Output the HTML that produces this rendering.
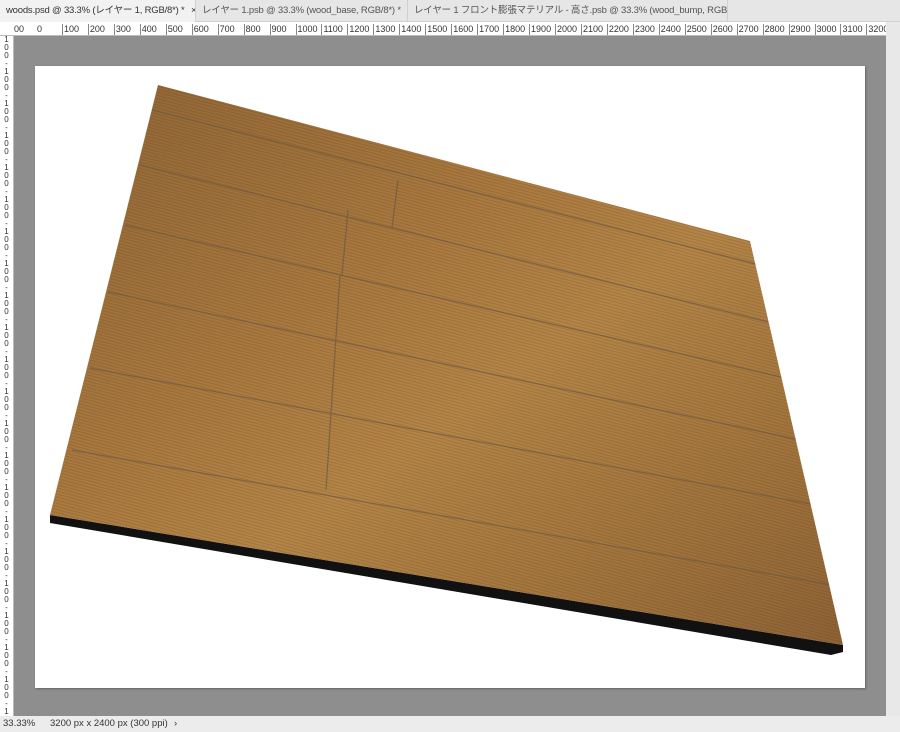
<!DOCTYPE html>
<html><head><meta charset="utf-8"><style>
*{margin:0;padding:0;box-sizing:border-box}
body{width:900px;height:732px;overflow:hidden;background:#8e8e8e;font-family:"Liberation Sans","Noto Sans CJK JP",sans-serif;position:relative}
.tabs{position:absolute;left:0;top:0;width:900px;height:22px;background:#e6e6e6;border-bottom:1px solid #d0d0d0;font-size:9.5px;color:#555}
.tab{position:absolute;top:0;height:22px;line-height:22px;padding-left:6px;border-right:1px solid #d0d0d0;white-space:nowrap;overflow:hidden;letter-spacing:-0.2px}
.ruler{position:absolute;left:0;top:22px;width:900px;height:14px;background:#fff;border-bottom:1px solid #bbb;font-size:9px;color:#333;overflow:hidden;white-space:nowrap}
.vr{position:absolute;left:0;top:36px;width:14px;height:680px;background:#fff;border-right:1px solid #bbb;font-size:8px;line-height:8px;color:#333;overflow:hidden;text-align:center}
.status{position:absolute;left:0;top:716px;width:900px;height:16px;background:#ececec;font-size:9.5px;line-height:16px;color:#333;white-space:nowrap}
.sb{position:absolute;left:886px;top:22px;width:14px;height:694px;background:#e8e8e8}
</style></head><body>
<div class="tabs">
<div class="tab" style="left:0;width:196px;background:#f2f2f2;color:#333">woods.psd @ 33.3% (レイヤー 1, RGB/8*) * <span style="margin-left:4px">×</span></div>
<div class="tab" style="left:196px;width:212px">レイヤー 1.psb @ 33.3% (wood_base, RGB/8*) * <span style="margin-left:4px">×</span></div>
<div class="tab" style="left:408px;width:320px">レイヤー 1 フロント膨張マテリアル - 高さ.psb @ 33.3% (wood_bump, RGB/8*) <span style="margin-left:4px">×</span></div>
</div>
<div class="ruler">
<span style="position:absolute;left:14px;top:2px">00</span>
<span style="position:absolute;left:37px;top:2px">0</span>
<script>
for(let i=1;i<=32;i++){document.write('<span style="position:absolute;left:'+(36+i*25.95)+'px;top:2px;border-left:1px solid #888;padding-left:1px;height:12px">'+(i*100)+'</span>')}
</script>
</div>
<div class="vr">
<script>for(let i=0;i<90;i++)document.write((i%4==0?'1':i%4==1?'0':i%4==2?'0':'-')+'<br>')</script>
</div>
<div class="sb"></div>
<div style="position:absolute;left:35px;top:66px;width:830px;height:622px;background:#fff;box-shadow:1px 1px 2px rgba(0,0,0,.3)"></div>
<svg style="position:absolute;left:0;top:0" width="900" height="732">
<defs>
<linearGradient id="g" x1="0" y1="0" x2="1" y2="1">
<stop offset="0" stop-color="#8e6535"/><stop offset=".35" stop-color="#a8783f"/><stop offset=".55" stop-color="#b48548"/><stop offset=".8" stop-color="#a0733c"/><stop offset="1" stop-color="#8d6236"/>
</linearGradient>
<pattern id="grain" width="6" height="3" patternUnits="userSpaceOnUse" patternTransform="rotate(15)">
<rect width="6" height="1" fill="rgba(60,35,10,.15)"/>
</pattern>
<clipPath id="c"><polygon points="158,85 750,241 843,645 50,515"/></clipPath>
</defs>
<polygon points="50,515 843,645 843,652 831,655 50,523" fill="#111"/>
<polygon points="158,85 750,241 843,645 50,515" fill="url(#g)"/>
<g clip-path="url(#c)">
<polygon points="158,85 750,241 843,645 50,515" fill="url(#grain)"/>
<g stroke="#6e5a45" stroke-width="1.2" opacity=".75">
<line x1="152" y1="110" x2="756" y2="264"/>
<line x1="140" y1="165" x2="768" y2="322"/>
<line x1="125" y1="225" x2="785" y2="378"/>
<line x1="108" y1="292" x2="800" y2="440"/>
<line x1="90" y1="368" x2="815" y2="505"/>
<line x1="72" y1="450" x2="832" y2="585"/>
<line x1="398" y1="180" x2="392" y2="228"/>
<line x1="348" y1="210" x2="342" y2="275"/>
<line x1="340" y1="275" x2="326" y2="490"/>
</g>
</g>
</svg>
<div class="status"><span style="position:absolute;left:3px">33.33%</span><span style="position:absolute;left:50px">3200 px x 2400 px (300 ppi)</span><span style="position:absolute;left:174px">›</span></div>
</body></html>
